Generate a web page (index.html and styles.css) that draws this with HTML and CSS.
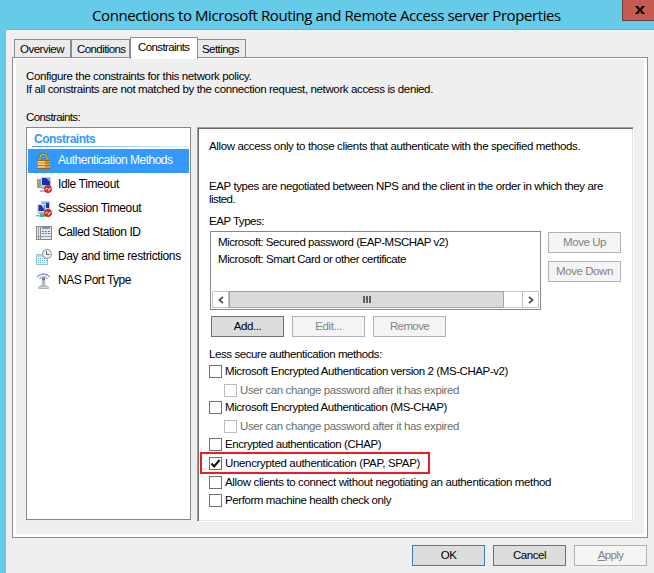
FILE: index.html
```
<!DOCTYPE html>
<html lang="en">
<head>
<meta charset="utf-8">
<title>Connections to Microsoft Routing and Remote Access server Properties</title>
<link rel="stylesheet" href="styles.css">
</head>
<body>
<div class="window">
  <header class="titlebar">
    <h1>Connections to Microsoft Routing and Remote Access server Properties</h1>
    <div class="close"><svg width="10" height="8" viewBox="0 0 10 8"><path d="M0 0h3l2 2.4L7 0h3L6.6 4 10 8H7L5 5.6 3 8H0l3.4-4z"/></svg></div>
  </header>
  <main class="client">
    <nav class="tabs">
      <div class="tab overview">Overview</div>
      <div class="tab conditions">Conditions</div>
      <div class="tab active">Constraints</div>
      <div class="tab settings">Settings</div>
    </nav>
    <section class="page">
      <p class="s37">Configure the constraints for this network policy.</p>
      <p class="s37">If all constraints are not matched by the connection request, network access is denied.</p>
      <p class="caption s61">Constraints:</p>
      <div class="columns">
        <aside class="list">
          <h2>Constraints</h2>
          <div class="item selected">
            <svg width="16" height="16" viewBox="0 0 16 16"><path d="M4 8V4.500Q4 1.200 7.500 1.200T11 4.500V8" fill="none" stroke="#8b6a22" stroke-width="2.600"/><path d="M4 8V4.500Q4 1.300 7.500 1.300T11 4.500V8" fill="none" stroke="#e6c880" stroke-width="1"/><path d="M1 7h13v9H1z" fill="#d79b2e"/><path d="M1 7h13v1H1zM1 9.500h13v.7H1zM1 12h13v.7H1zM1 15h13v1H1z" fill="#9a6510"/><path d="M2 8h7v1.500H2zM2 10.500h7V12H2zM2 13h7v1.500H2z" fill="#f8d486"/></svg>
            <span class="s50">Authentication Methods</span>
          </div>
          <div class="item">
            <svg width="16" height="16" viewBox="0 0 16 16"><path d="M5 0h10v10H5z" fill="#c9cdd8"/><path d="M6 1h8v7H6z" fill="#1733b0"/><path d="M10 1h4v4z" fill="#7ea2ee"/><path d="M1 2h4v9H1z" fill="#9ba09d"/><path d="M2 4h2v3H2z" fill="#69c93a"/><path d="M5 10h5v2H5zM4 13h6v2H4z" fill="#b6b7bb"/><circle cx="12" cy="12" r="3.900" fill="#c82b2b"/><path d="M9.500 12.500l2-1.500M12 14l2.500-3" stroke="#f4c3c3" stroke-width="1.300"/></svg>
            <span class="s37">Idle Timeout</span>
          </div>
          <div class="item">
            <svg width="16" height="16" viewBox="0 0 16 16"><path d="M5 0h9v9H5z" fill="#c4cbd8"/><path d="M6 1h7v6H6z" fill="#8facdf"/><path d="M10 2h3v5h-3z" fill="#1733b0"/><path d="M1 3h9v8H1z" fill="#d8dce5"/><path d="M2.500 4h6v6h-6z" fill="#1733b0"/><path d="M5 4h3v4z" fill="#a6c5fa"/><path d="M2 11h7v2H2z" fill="#b6b7bb"/><path d="M0 14h10v1.500H0z" fill="#9cb4aa"/><path d="M4 12.500h5V16H4z" fill="#3dbb7c"/><circle cx="12" cy="12" r="3.900" fill="#c82b2b"/><path d="M9.500 12.500l2-1.500M12 14l2.500-3" stroke="#f4c3c3" stroke-width="1.300"/></svg>
            <span class="s37">Session Timeout</span>
          </div>
          <div class="item">
            <svg width="16" height="16" viewBox="0 0 16 16"><path d="M0 1h16v14H0z" fill="#84898f"/><path d="M1 2h3v12H1z" fill="#e5e7e9"/><path d="M2 2h1v12H2z" fill="#a4a8ad"/><path d="M5 2h10v12H5z" fill="#e6e9eb"/><path d="M6 2h8v2H6z" fill="#6d98bc"/><path d="M6 6h2v1H6zM9 6h2v1H9zM12 6h2v1h-2zM6 8h2v1H6zM9 8h2v1H9zM12 8h2v1h-2z" fill="#3986bd"/><path d="M1 11h14v1H1z" fill="#989da2"/></svg>
            <span class="s44">Called Station ID</span>
          </div>
          <div class="item">
            <svg width="16" height="16" viewBox="0 0 16 16"><path d="M.5 5.500h11v10H.5z" fill="#f4fbff" stroke="#9fbecb"/><path d="M1 6h10v2H1z" fill="#bad8e5"/><path d="M2 9.500h9M2 11.500h9M2 13.500h8" stroke="#53a8cf" stroke-dasharray="1 1"/><circle cx="11" cy="5" r="4.400" fill="#eef2f3" stroke="#9aa5aa" stroke-width="1.200"/><path d="M10.500 2v3.500h3" fill="none" stroke="#54616a"/></svg>
            <span class="s37">Day and time restrictions</span>
          </div>
          <div class="item">
            <svg width="16" height="16" viewBox="0 0 16 16" fill="none"><path d="M1 4Q7.500-2 14 4M3.500 6Q7.500 1.500 11.500 6" stroke="#929bc7" stroke-width="1.200"/><path d="M6 4.500h3v3H6z" fill="#717790"/><path d="M7.500 7v7" stroke="#a5a8b0" stroke-width="2.500"/><path d="M5 10.500h5M4.500 12.500h6" stroke="#c0c2c8"/><path d="M2.500 15.500v-1.500l3-1h4l3 1v1.500z" fill="#d5d7db" stroke="#989ba0" stroke-width=".7"/></svg>
            <span class="s47">NAS Port Type</span>
          </div>
        </aside>
        <section class="panel">
          <p class="intro s37">Allow access only to those clients that authenticate with the specified methods.</p>
          <p class="s39">EAP types are negotiated between NPS and the client in the order in which they are</p>
          <p class="s58">listed.</p>
          <p class="eap-label s46">EAP Types:</p>
          <div class="eap-row">
            <div class="listbox">
              <p class="s47">Microsoft: Secured password (EAP-MSCHAP v2)</p>
              <p class="s45">Microsoft: Smart Card or other certificate</p>
              <div class="scrollbar">
                <div class="arrow"><svg width="6" height="8" viewBox="0 0 6 8"><path d="M5 .8 1.500 4 5 7.200"/></svg></div>
                <div class="thumb"><i></i><i></i><i></i></div>
                <div class="track"></div>
                <div class="arrow"><svg width="6" height="8" viewBox="0 0 6 8"><path d="M1 .8 4.500 4 1 7.200"/></svg></div>
              </div>
            </div>
            <div class="move">
              <button class="s20" disabled>Move Up</button>
              <button class="s20" disabled>Move Down</button>
            </div>
          </div>
          <div class="actions">
            <button class="s20">Add...</button>
            <button class="s20" disabled>Edit...</button>
            <button class="s61" disabled>Remove</button>
          </div>
          <p class="methods-label s41">Less secure authentication methods:</p>
          <div class="methods">
            <label class="check s42"><i></i>Microsoft Encrypted Authentication version 2 (MS-CHAP-v2)</label>
            <label class="check sub s40"><i></i>User can change password after it has expired</label>
            <label class="check s43"><i></i>Microsoft Encrypted Authentication (MS-CHAP)</label>
            <label class="check sub s40"><i></i>User can change password after it has expired</label>
            <label class="check s43"><i></i>Encrypted authentication (CHAP)</label>
            <label class="check marked s34"><i><svg width="11" height="11" viewBox="0 0 11 11"><path d="M1.500 5.500 4.200 8.500 9.500 2"/></svg></i>Unencrypted authentication (PAP, SPAP)</label>
            <label class="check s36"><i></i>Allow clients to connect without negotiating an authentication method</label>
            <label class="check s41"><i></i>Perform machine health check only</label>
          </div>
        </section>
      </div>
    </section>
    <footer>
      <button class="default s20">OK</button>
      <button class="s20">Cancel</button>
      <button class="s61" disabled><u>A</u>pply</button>
    </footer>
  </main>
</div>
</body>
</html>
```
FILE: styles.css
```
* { box-sizing: border-box; }

body {
  margin: 0;
  width: 654px;
  height: 573px;
  overflow: hidden;
  background: #66cae9;
  color: #000;
  font: 11.5px/13px "Liberation Sans", Arial, sans-serif;
}

h1, h2, p { margin: 0; font-weight: normal; white-space: nowrap; }
svg { display: block; flex: none; }

/* Letter spacing steps */
.s20 { letter-spacing: -0.44px; }
.s34 { letter-spacing: -0.336px; }
.s36 { letter-spacing: -0.362px; }
.s37 { letter-spacing: -0.37px; }
.s39 { letter-spacing: -0.393px; }
.s40 { letter-spacing: -0.403px; }
.s41 { letter-spacing: -0.411px; }
.s42 { letter-spacing: -0.417px; }
.s43 { letter-spacing: -0.431px; }
.s44 { letter-spacing: -0.444px; }
.s45 { letter-spacing: -0.454px; }
.s46 { letter-spacing: -0.467px; }
.s47 { letter-spacing: -0.472px; }
.s50 { letter-spacing: -0.496px; }
.s58 { letter-spacing: -0.578px; }
.s61 { letter-spacing: -0.613px; }

.titlebar {
  display: flex;
  justify-content: space-between;
  align-items: flex-start;
  height: 29px;
  padding-left: 92px;
}
.titlebar h1 {
  font: 15px/30px "Open Sans", "Noto Sans", sans-serif;
  letter-spacing: -0.41px;
}
.close {
  display: flex;
  align-items: center;
  justify-content: center;
  width: 32px;
  height: 21px;
  padding-left: 2px;
  border: solid #703c3a;
  border-width: 0 0 1px 1px;
  background: #c55a51;
}

.client {
  height: 544px;
  margin-left: 6px;
  padding: 7px 6px 0;
  border-top: 1px solid #82acb9;
  background: #efefef;
}

.tabs { display: flex; align-items: flex-end; height: 20px; padding-left: 2px; }
.tab {
  height: 18px;
  padding-left: 5px;
  border: 1px solid #898c95;
  border-bottom: 0;
  background: #ebebeb;
  line-height: 18px;
  white-space: nowrap;
}
.overview { width: 57px; letter-spacing: -0.492px; }
.conditions { width: 59px; letter-spacing: -0.584px; }
.settings { width: 48px; padding-left: 4px; border-left: 0; letter-spacing: -0.57px; }
.tab.active {
  z-index: 1;
  width: 68px;
  height: 22px;
  margin-bottom: -2px;
  padding-left: 7px;
  background: #fff;
  letter-spacing: -0.607px;
}

.page {
  width: 636px;
  height: 481px;
  padding: 12px 10px 0;
  border: 1px solid #898c95;
  box-shadow: inset 3px 1px #fff, inset -3px -3px #fff;
}
.page > p { padding-left: 3px; }
.page > .caption { margin-top: 15px; }
.columns { display: flex; gap: 6px; margin: 3px 0 0 3px; }

.list { width: 165px; height: 393px; padding: 1px; border: 1px solid #828790; background: #fff; }
.list h2 {
  height: 18px;
  margin: 0 1px 2px 4px;
  padding-left: 2px;
  background: linear-gradient(90deg, #4ba0e9, #e3f0fc) left bottom / 100% 1px no-repeat;
  color: #3399ff;
  font: bold 12px/20px "Liberation Sans", Arial, sans-serif;
  letter-spacing: -0.5px;
}
.item {
  display: flex;
  align-items: center;
  gap: 6px;
  height: 24px;
  padding-left: 8px;
  font-size: 12px;
  white-space: nowrap;
}
.item span { padding-bottom: 2px; }
.selected { background: #3399ff; color: #fff; }

.panel {
  width: 437px;
  height: 395px;
  padding: 10px 0 0 10px;
  border: 1px solid;
  border-color: #a0a0a0 #fff #fff #a0a0a0;
  background: #fff;
  box-shadow: inset 1px 1px #696969, inset -1px -1px #e3e3e3;
}
.panel > p { padding-left: 1px; }
.intro { margin: 2px 0 27px; }
.eap-label { margin-top: 9px; }
.eap-row { display: flex; gap: 7px; margin: 3px 0 0 2px; }
.listbox { width: 331px; height: 79px; padding: 2px 1px 1px; border: 1px solid #828790; }
.listbox p { height: 17px; padding-left: 6px; line-height: 17px; }
.scrollbar { display: flex; height: 17px; margin-top: 23px; }
.arrow {
  display: flex;
  align-items: center;
  justify-content: center;
  width: 17px;
  border: 1px solid #c4c4c4;
}
.arrow svg { fill: none; stroke: #505050; stroke-width: 1.7; }
.thumb {
  display: flex;
  align-items: center;
  justify-content: center;
  gap: 1px;
  width: 275px;
  border: 1px solid #a3a3a3;
  background: #dadada;
}
.thumb i { width: 2px; height: 7px; background: #606060; }
.track { width: 18px; border: solid #cdcdcd; border-width: 1px 0; }

button {
  width: 73px;
  height: 21px;
  padding: 0;
  border: 1px solid #707070;
  background: #ddd;
  color: #000;
  font: 11.5px/17px "Liberation Sans", Arial, sans-serif;
  text-align: center;
}
button:disabled { border-color: #adb2b5; background: #f4f4f4; color: #838383; }
button.default { border-color: #3c7fb1; }

.move { display: flex; flex-direction: column; gap: 8px; padding-top: 1px; }
.actions { display: flex; gap: 8px; margin: 6px 0 0 3px; }
.methods-label { margin-top: 11px; }
.methods { display: grid; grid-template-rows: 19px 17px 19px 18px 19px 19px 18px 18px; margin: 4px 0 0 1px; }
.check { display: flex; align-items: flex-start; gap: 3px; line-height: 13px; white-space: nowrap; }
.check i { display: block; width: 13px; height: 13px; border: 1px solid #707070; background: #fff; }
.check svg { fill: none; stroke: #111; stroke-width: 2.1; }
.sub { margin-left: 15px; color: #6d6d6d; }
.sub i { border-color: #bcbcbc; }
.marked {
  width: 230px;
  height: 22px;
  margin: -5px 0 0 -9px;
  padding: 3px 0 0 7px;
  border: 2px solid #ed1c24;
}

footer { display: flex; gap: 8px; margin: 7px 0 0 400px; }
footer button { height: 21px; }
```
